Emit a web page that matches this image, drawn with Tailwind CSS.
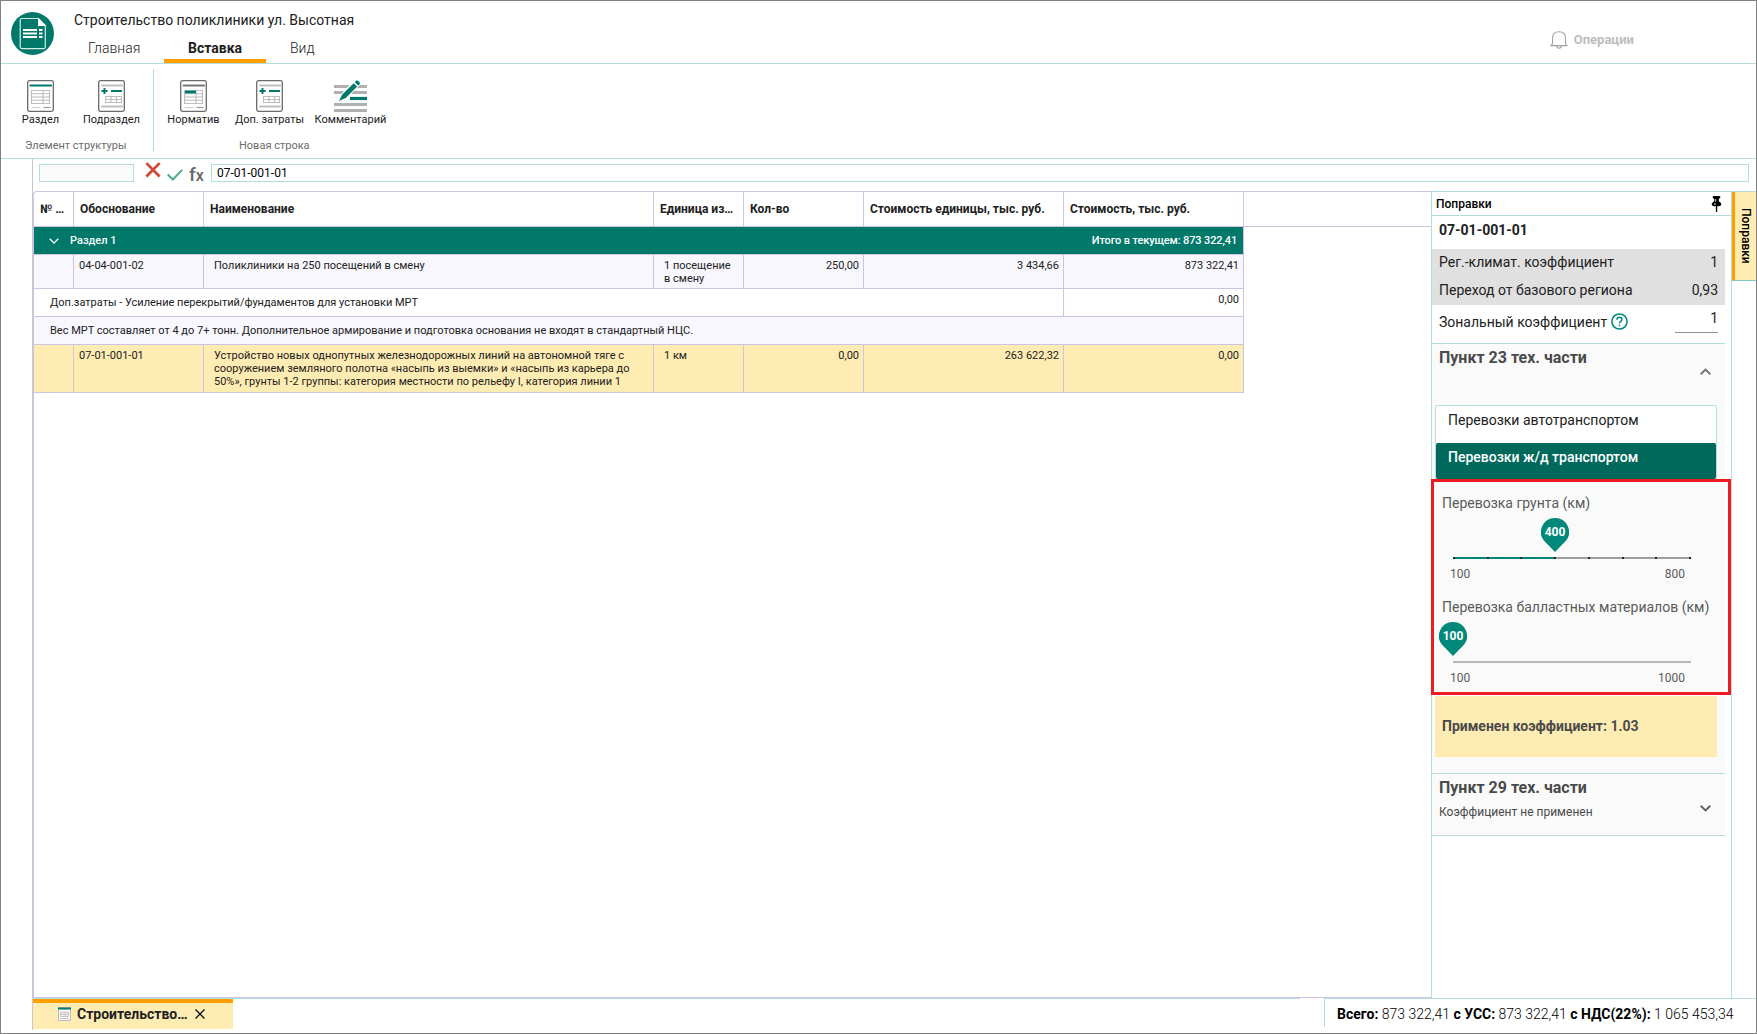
<!DOCTYPE html>
<html lang="ru">
  <head>
    <meta charset="UTF-8">
    <title>Строительство поликлиники ул. Высотная</title>
    <meta name="viewport" content="width=device-width, initial-scale=1.0">
    <script src="https://cdn.jsdelivr.net/npm/@tailwindcss/browser@4"></script>
  </head>
  <body class="h-[1034px] w-[1757px] overflow-hidden border border-[#808080] bg-white font-['Roboto',sans-serif] text-sm text-[#212121] flex flex-col whitespace-nowrap">

    <!-- Header -->
    <header class="h-[63px] shrink-0 border-b border-[#b2dfdb] flex">
      <svg class="ml-[10px] mt-[11px] size-[43px] shrink-0" viewBox="0 0 43 43" fill="none">
        <circle cx="21.5" cy="21.5" r="21.5" fill="#00796b"/>
        <path d="M27.5 6.5H11a1.8 1.8 0 0 0-1.800 1.800v26.500a1.800 1.800 0 0 0 1.800 1.800h21.500a1.800 1.800 0 0 0 1.800-1.800V13.500z" stroke="#d5ebe8" stroke-width="1.200"/>
        <path d="M27 6v8h8z" fill="#fff"/>
        <path d="M12 18h14M12 21.500h14M12 25h14M28 18h3.500M28 21.500h3.500M28 25h3.500" stroke="#fff" stroke-width="1.800"/>
      </svg>
      <div class="ml-5 flex flex-col">
        <h1 class="mt-[9px] leading-5">Строительство поликлиники ул. Высотная</h1>
        <nav class="mt-[7px] flex h-[26px] font-light leading-[23px]">
          <a class="w-[90px] pl-[14px]">Главная</a>
          <a class="w-[102px] border-b-4 border-[#ffa000] text-center font-bold">Вставка</a>
          <a class="pl-[24px]">Вид</a>
        </nav>
      </div>
      <div class="ml-auto mr-[122px] mt-[28px] flex h-[22px] items-center text-[13px] font-bold text-[#bdbdbd]">
        <svg class="mr-[6px] size-[18px]" viewBox="0 0 18 18" fill="none" stroke="#a0a0a0" stroke-width="1.100">
          <path d="M.6 14.600h16.800c-1.300-.5-1.900-1.300-1.900-2.800V7C15.500 3 13.300.7 9 .7S2.600 3 2.600 7v4.800c0 1.500-.7 2.300-2 2.800z"/>
          <path d="M6.400 15c.4 1.500 1.300 2.200 2.600 2.200s2.200-.7 2.600-2.200"/>
        </svg>
        Операции
      </div>
    </header>

    <!-- Ribbon -->
    <section class="h-[95px] shrink-0 border-b border-[#b2dfdb] flex text-[11px]">
      <div class="mt-[5px] h-[82px] w-[153px] border-r border-[#b2dfdb]">
        <div class="flex h-[58px] items-start pt-[11px]">
          <div class="ml-[19px] flex w-[41px] flex-col items-center">
            <svg class="h-8 w-[27px]" viewBox="0 0 27 32" fill="none">
              <rect x=".7" y=".7" width="25.600" height="30.600" rx="1.800" stroke="#6b6b6b" stroke-width="1.300"/>
              <path d="M3.500 5.500h20.500" stroke="#00796b" stroke-width="2.200" stroke-linecap="round"/>
              <path d="M4.500 10.500h18v13h-18zM4.500 13.700h18M4.500 17h18M4.500 20.300h18M16 10.500v13" stroke="#bdbdbd" stroke-width="1.100"/>
              <path d="M4.500 27.500h9" stroke="#d0d0d0" stroke-width="1.200"/>
              <path d="M16.500 27.500h7" stroke="#999" stroke-width="1.200"/>
            </svg>
            <span class="mt-px leading-[13px]">Раздел</span>
          </div>
          <div class="ml-[21px] flex w-[59px] flex-col items-center">
            <svg class="h-8 w-[27px]" viewBox="0 0 27 32" fill="none">
              <rect x=".7" y=".7" width="25.600" height="30.600" rx="1.800" stroke="#6b6b6b" stroke-width="1.300"/>
              <path d="M4 5.500h20M4 26.500h20" stroke="#bdbdbd" stroke-width="1.800" stroke-linecap="round"/>
              <path d="M3.500 11h6M6.500 8v6M13 11h11" stroke="#00796b" stroke-width="1.900"/>
              <path d="M7.500 16.500h16v6h-16zM7.500 19.500h16M13 16.500v6M18.500 16.500v6" stroke="#bdbdbd" stroke-width="1.100"/>
            </svg>
            <span class="mt-px leading-[13px]">Подраздел</span>
          </div>
        </div>
        <div class="pl-[24px] pt-3 leading-[13px] text-[#6b6b6b]">Элемент структуры</div>
      </div>
      <div class="mt-[5px] h-[82px] w-[240px]">
        <div class="flex h-[58px] items-start pt-[11px]">
          <div class="ml-[12px] flex w-[55px] flex-col items-center">
            <svg class="h-8 w-[27px]" viewBox="0 0 27 32" fill="none">
              <rect x=".7" y=".7" width="25.600" height="30.600" rx="1.800" stroke="#6b6b6b" stroke-width="1.300"/>
              <path d="M3.500 5.500h20.500" stroke="#757575" stroke-width="2" stroke-linecap="round"/>
              <path d="M4.500 10.500h18v13h-18zM4.500 13.700h18M4.500 17h18M4.500 20.300h18M16 10.500v13" stroke="#bdbdbd" stroke-width="1.100"/>
              <path d="M5 12h11" stroke="#00796b" stroke-width="2.800"/>
              <path d="M4.500 27.500h9" stroke="#d0d0d0" stroke-width="1.200"/>
              <path d="M16.500 27.500h7" stroke="#999" stroke-width="1.200"/>
            </svg>
            <span class="mt-px leading-[13px]">Норматив</span>
          </div>
          <div class="ml-[13px] flex w-[71px] flex-col items-center">
            <svg class="h-8 w-[27px]" viewBox="0 0 27 32" fill="none">
              <rect x=".7" y=".7" width="25.600" height="30.600" rx="1.800" stroke="#6b6b6b" stroke-width="1.300"/>
              <path d="M4 5.500h20M4 26.500h20" stroke="#bdbdbd" stroke-width="1.800" stroke-linecap="round"/>
              <path d="M3.500 11h6M6.500 8v6M13 11h11" stroke="#00796b" stroke-width="1.900"/>
              <path d="M7.500 16.500h16v6h-16zM7.500 19.500h16M13 16.500v6M18.500 16.500v6" stroke="#bdbdbd" stroke-width="1.100"/>
            </svg>
            <span class="mt-px leading-[13px]">Доп. затраты</span>
          </div>
          <div class="ml-[9px] flex w-[73px] flex-col items-center">
            <svg class="h-8 w-[33px]" viewBox="0 0 33 32" fill="none">
              <path d="M0 6.500h33M0 12.500h33M0 24.500h33M0 30.500h33" stroke="#b0b0b0" stroke-width="3"/>
              <path d="M5.500 21 23.500 2" stroke="#fff" stroke-width="7"/>
              <path d="M16 18.500h17" stroke="#00796b" stroke-width="3.200"/>
              <path d="M8.200 14.600 19.700 3.200l3.500 3.400L11.700 18 5 21z" fill="#00796b"/>
              <path d="m20.700 2.300 1.500-1.500c1.300-1.300 4.700 1.700 3.500 3.200l-1.500 1.600z" fill="#00796b"/>
            </svg>
            <span class="mt-px leading-[13px]">Комментарий</span>
          </div>
        </div>
        <div class="pl-[85px] pt-3 leading-[13px] text-[#6b6b6b]">Новая строка</div>
      </div>
    </section>

    <!-- Work area -->
    <div class="ml-[31px] flex h-[839px] shrink-0 flex-col border-l border-[#c8c8cc]">
      <div class="flex h-8 shrink-0 items-start">
        <div class="ml-[6px] mt-[5px] h-[18px] w-[95px] border border-[#b2dfdb] bg-[#fafafa]"></div>
        <svg class="ml-[11px] mt-[3px] h-4 w-[16px]" viewBox="0 0 17 17" fill="none" stroke="#cf4a35" stroke-width="3">
          <path d="M1.500 1.200 15.500 15.300M15.500 1.200 1.500 15.300"/>
        </svg>
        <svg class="ml-[6px] mt-[10px] h-3 w-4" viewBox="0 0 16 12" fill="none" stroke="#4caf83" stroke-width="2">
          <path d="m.8 5.500 5 5L15.200.9"/>
        </svg>
        <div class="ml-[6px] mt-[5px] w-[16px] text-[19px] font-medium leading-5 text-[#666]">f<span class="text-base">x</span></div>
        <div class="ml-[6px] mr-[7px] mt-[5px] h-[18px] flex-1 border border-[#b2dfdb] pl-[5px] text-xs leading-4 text-black">07-01-001-01</div>
      </div>

      <div class="flex h-[807px]">
        <!-- Estimate grid -->
        <main class="w-[1398px] rounded-tl-sm border-b border-l border-t border-[#cdc3e4]">
          <div class="flex h-[35px] border-b border-[#cdc3e4] text-xs font-bold leading-[34px] *:border-r *:border-[#cdc3e4] *:pl-[6px]">
            <div class="w-[40px]">№ …</div>
            <div class="w-[130px]">Обоснование</div>
            <div class="w-[450px]">Наименование</div>
            <div class="w-[90px]">Единица из…</div>
            <div class="w-[120px]">Кол-во</div>
            <div class="w-[200px]">Стоимость единицы, тыс. руб.</div>
            <div class="w-[180px]">Стоимость, тыс. руб.</div>
          </div>
          <div class="w-[1210px] text-[11px] leading-[13px] *:border-b *:border-r *:border-[#cdc3e4]">
            <div class="flex h-[28px] items-center bg-[#00796b] pr-[6px] font-medium text-white">
              <svg class="ml-[15px] h-[6px] w-[10px]" viewBox="0 0 10 6" fill="none" stroke="#fff" stroke-width="1.300"><path d="m.7.700 4.300 4.300L9.300.700"/></svg>
              <span class="ml-[11px]">Раздел 1</span>
              <span class="ml-auto tracking-[-0.13px]">Итого в текущем: 873 322,41</span>
            </div>
            <div class="flex h-[34px] bg-[#f8f7fd] *:pt-1 *:not-last:border-r *:border-[#cdc3e4]">
              <div class="w-[40px]"></div>
              <div class="w-[130px] pl-[5px]">04-04-001-02</div>
              <div class="w-[450px] pl-[10px]">Поликлиники на 250 посещений в смену</div>
              <div class="w-[90px] pl-[10px]">1 посещение<br>в смену</div>
              <div class="w-[120px] pr-1 text-right">250,00</div>
              <div class="w-[200px] pr-1 text-right">3 434,66</div>
              <div class="w-[179px] pr-1 text-right">873 322,41</div>
            </div>
            <div class="flex h-[28px]">
              <div class="flex w-[1030px] items-center border-r border-[#cdc3e4] pl-4">Доп.затраты - Усиление перекрытий/фундаментов для установки МРТ</div>
              <div class="w-[179px] pr-1 pt-1 text-right">0,00</div>
            </div>
            <div class="flex h-[28px] items-center bg-[#f8f7fd] pl-4">Вес МРТ составляет от 4 до 7+ тонн. Дополнительное армирование и подготовка основания не входят в стандартный НЦС.</div>
            <div class="flex h-[48px] bg-[#ffecb3] *:pt-1 *:not-last:border-r *:border-[#cdc3e4]">
              <div class="w-[40px]"></div>
              <div class="w-[130px] pl-[5px]">07-01-001-01</div>
              <div class="w-[450px] pl-[10px]">Устройство новых однопутных железнодорожных линий на автономной тяге с<br>сооружением земляного полотна «насыпь из выемки» и «насыпь из карьера до<br>50%», грунты 1-2 группы: категория местности по рельефу I, категория линии 1</div>
              <div class="w-[90px] pl-[10px]">1 км</div>
              <div class="w-[120px] pr-1 text-right">0,00</div>
              <div class="w-[200px] pr-1 text-right">263 622,32</div>
              <div class="w-[179px] pr-1 text-right">0,00</div>
            </div>
          </div>
        </main>

        <!-- Corrections panel -->
        <aside class="relative w-[301px] border-x border-t border-[#b2dfdb]">
          <div class="flex h-[24px] items-center border-b border-[#b2dfdb] pl-[4px] pr-[9px] text-xs font-medium text-black">
            Поправки
            <svg class="ml-auto mt-px h-4 w-[11px]" viewBox="0 0 11 16" fill="#000">
              <path d="M3 0h5a1.200 1.200 0 0 1 .8 2.200L7.800 3v2.500c1.600.7 2.500 1.700 2.500 3.200 0 .8-1.500 1.500-4.100 1.600V16H4.900v-5.700C2.300 10.200.7 9.500.7 8.700c0-1.500.9-2.500 2.500-3.200V3l-1-.800A1.200 1.200 0 0 1 3 0z"/>
              <path d="M4.600 3.200v2.300M3 8h2" stroke="#fff" stroke-width=".9"/>
            </svg>
          </div>
          <div class="w-[293px]">
            <div class="h-[33px] pl-[7px] font-bold leading-[29px]">07-01-001-01</div>
            <div class="h-[56px] bg-[#e0e0e0] pl-[7px] pr-[7px] leading-[26px]">
              <div class="flex h-[28px] justify-between"><span>Рег.-климат. коэффициент</span><span>1</span></div>
              <div class="flex h-[28px] justify-between"><span>Переход от базового региона</span><span>0,93</span></div>
            </div>
            <div class="flex h-[39px] border-b border-[#b2dfdb] pl-[7px] pr-[7px]">
              <span class="leading-[34px]">Зональный коэффициент</span>
              <svg class="ml-[4px] mt-2 size-[17px]" viewBox="0 0 17 17" fill="none" stroke="#00897b" stroke-width="1.500">
                <circle cx="8.500" cy="8.500" r="7.600"/>
                <path d="M6 6.800c0-1.500 1-2.500 2.500-2.500S11 5.300 11 6.600c0 1.700-2.500 1.900-2.500 3.900M8.500 11.700v1.600"/>
              </svg>
              <span class="ml-auto h-[28px] w-[43px] border-b border-[#8f8f8f] text-right leading-[27px]">1</span>
            </div>

            <section class="h-[430px] border-b border-[#b2dfdb] bg-[#fafafa] pl-[3px] text-[#4a4a4a]">
              <div class="flex h-[61px] justify-between pl-1 pr-[14px]">
                <h2 class="text-base font-bold leading-[28px]">Пункт 23 тех. части</h2>
                <svg class="mt-[24px] h-[7px] w-[11px]" viewBox="0 0 11 7" fill="none" stroke="#757575" stroke-width="1.900"><path d="m.7 6.200 4.800-4.700 4.800 4.700"/></svg>
              </div>
              <div class="h-[75px] w-[282px] rounded-xs border border-[#b2dfdb] bg-white">
                <div class="h-[37px] pl-3 leading-[29px] text-[#212121]">Перевозки автотранспортом</div>
                <div class="h-[36px] rounded-xs bg-[#00695c] pl-3 font-medium leading-[29px] text-white">Перевозки ж/д транспортом</div>
              </div>
              <div class="h-[216px] pt-[13px] text-[#5a5a5a]">
                <div class="pl-[7px] leading-[20px]">Перевозка грунта (км)</div>
                <div class="relative ml-[18px] mt-[44px] flex h-[2px] w-[238px]">
                  <div class="w-[102px] bg-[#00897b]"></div>
                  <div class="flex-1 bg-[#9e9e9e]"></div>
                  <div class="absolute inset-0 flex justify-between *:h-[2px] *:w-[2px] *:bg-[#212121]">
                    <i></i><i></i><i></i><i></i><i></i><i></i><i></i><i></i>
                  </div>
                  <div class="absolute -top-[39px] left-[88px] h-[34px] w-[28px] text-center text-xs font-bold leading-[28px] text-white">
                    <svg class="absolute inset-0" viewBox="0 0 28 34"><path d="M14 0a14 14 0 0 1 10.500 23.300L14 34 3.500 23.300A14 14 0 0 1 14 0z" fill="#00897b"/></svg>
                    <span class="relative">400</span>
                  </div>
                </div>
                <div class="flex justify-between pl-[15px] pr-[29px] pt-[7px] text-xs leading-[16px]"><span>100</span><span class="pr-[11px]">800</span></div>
                <div class="mt-[14px] pl-[7px] leading-[22px]">Перевозка балластных материалов (км)</div>
                <div class="relative ml-[18px] mt-[43px] flex h-[2px] w-[238px]">
                  <div class="flex-1 bg-[#b8b8b8]"></div>
                  <div class="absolute -left-[14px] -top-[39px] h-[34px] w-[28px] text-center text-xs font-bold leading-[28px] text-white">
                    <svg class="absolute inset-0" viewBox="0 0 28 34"><path d="M14 0a14 14 0 0 1 10.500 23.300L14 34 3.500 23.300A14 14 0 0 1 14 0z" fill="#00897b"/></svg>
                    <span class="relative">100</span>
                  </div>
                </div>
                <div class="flex justify-between pl-[15px] pr-[29px] pt-[7px] text-xs leading-[16px]"><span>100</span><span class="pr-[11px]">1000</span></div>
              </div>
              <div class="h-[61px] w-[282px] bg-[#ffecb3] pl-[7px] font-bold leading-[61px]">Применен коэффициент: 1.03</div>
            </section>

            <section class="h-[62px] border-b border-[#b2dfdb] bg-[#fafafa] pl-[7px] pr-[14px] text-[#4a4a4a]">
              <h2 class="h-[28px] text-base font-bold leading-[28px]">Пункт 29 тех. части</h2>
              <div class="flex items-start justify-between text-xs">
                <span class="leading-[20px]">Коэффициент не применен</span>
                <svg class="mt-[3px] h-[7px] w-[11px]" viewBox="0 0 11 7" fill="none" stroke="#616161" stroke-width="1.900"><path d="M.7.800 5.500 5.500 10.300.800"/></svg>
              </div>
            </section>
          </div>

          <!-- Highlight frame -->
          <div class="absolute -left-px top-[287px] h-[216px] w-[300px] border-[3px] border-[#ed1c24]"></div>
        </aside>

        <!-- Side tab -->
        <div class="flex-1 border-t border-[#b2dfdb]">
          <div class="flex h-[89px] w-6 items-center justify-center border-b border-l-[3px] border-b-[#80cbc4] border-l-[#ffa000] bg-[#ffecb3] text-xs font-medium text-black [writing-mode:vertical-rl]">Поправки</div>
        </div>
      </div>
    </div>

    <!-- Status bar -->
    <footer class="ml-[31px] flex h-[32px] items-start border-l border-[#c8c8cc]">
      <div class="flex h-[32px] w-[1267px] border-t border-[#b2dfdb]">
        <div class="flex h-[30px] w-[200px] items-center border-t-4 border-[#ffa000] bg-[#ffecb3] pb-[5px] pl-[25px] font-bold">
          <svg class="h-[14px] w-[13px]" viewBox="0 0 13 14" fill="none">
            <path d="M.5.500h12v13H.5z" fill="#f5f5f5" stroke="#bdbdbd"/>
            <path d="M0 1.500h13" stroke="#00796b" stroke-width="2"/>
            <path d="M2.500 5.500h8v4h-8zM2.500 7.500h8M7 5.500v4M2.500 11.500h8" stroke="#c4c4c4"/>
          </svg>
          <span class="ml-[6px] w-[111px]">Строительство…</span>
          <svg class="ml-[7px] mt-px size-[10px]" viewBox="0 0 10 10" fill="none" stroke="#111" stroke-width="1.400"><path d="m.5.500 9 9M9.500.500l-9 9"/></svg>
        </div>
      </div>
      <div class="ml-[24px] h-[29px] flex-1 border-l border-t border-[#b2dfdb] pl-3 font-light leading-[31px] text-black"><b class="font-bold">Всего:</b> 873 322,41 <b class="font-bold">с УСС:</b> 873 322,41 <b class="font-bold">с НДС(22%):</b> 1 065 453,34</div>
    </footer>
  </body>
</html>
